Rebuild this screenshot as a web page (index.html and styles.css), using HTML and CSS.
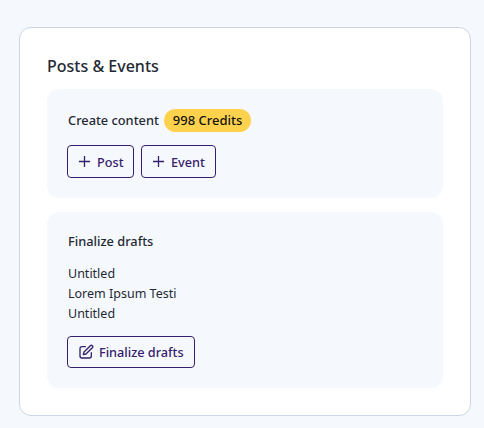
FILE: index.html

```html
<!DOCTYPE html>
<html lang="en">
<head>
  <meta charset="UTF-8">
  <meta name="viewport" content="width=device-width, initial-scale=1.0">
  <title>Posts &amp; Events</title>
  <link rel="stylesheet" href="styles.css">
</head>
<body>
  <div class="card">
    <h2 class="card-title">Posts &amp; Events</h2>
    <div class="panel panel-create">
      <div class="panel-head">
        <span class="panel-label">Create content</span>
        <span class="credits">998 Credits</span>
      </div>
      <div class="actions">
        <button class="btn">
          <svg class="icon-plus" viewBox="0 0 14 14"><path d="M7 1v12M1 7h12"/></svg>
          Post
        </button>
        <button class="btn btn-event">
          <svg class="icon-plus" viewBox="0 0 14 14"><path d="M7 1v12M1 7h12"/></svg>
          Event
        </button>
      </div>
    </div>
    <div class="panel panel-drafts">
      <div class="panel-label">Finalize drafts</div>
      <ul class="draft-list">
        <li>Untitled</li>
        <li>Lorem Ipsum Testi</li>
        <li>Untitled</li>
      </ul>
      <button class="btn btn-wide">
        <svg class="icon-edit" viewBox="0 0 24 24"><path d="M11 4H6a3 3 0 0 0-3 3v11a3 3 0 0 0 3 3h11a3 3 0 0 0 3-3v-5"/><path d="M18.5 2.5a2.1 2.1 0 0 1 3 3L12 15l-4 1 1-4z"/></svg>
        Finalize drafts
      </button>
    </div>
  </div>
</body>
</html>
```

FILE: styles.css

```css
* {
  box-sizing: border-box;
}
body {
  margin: 0;
  padding: 27px 13px 12px 19px;
  font-family: "Noto Sans", "Open Sans", sans-serif;
  background-color: #f5f9fd;
  color: #1f2933;
}
.card {
  height: 389px;
  padding: 27px;
  background-color: #fff;
  border: 1px solid #ccd5e3;
  border-radius: 12px;
}
.card-title {
  margin: 0 0 12px;
  font-size: 16px;
  line-height: 22px;
  font-weight: 500;
}
.panel {
  padding: 20px 20px 20px 21px;
  background-color: #f5f9fd;
  border-radius: 12px;
}
.panel-create {
  height: 109px;
  margin-bottom: 14px;
}
.panel-drafts {
  height: 176px;
  padding-top: 18px;
}
.panel-head {
  display: flex;
  align-items: center;
  gap: 5px;
  margin-bottom: 13px;
}
.panel-label {
  font-size: 12.8px;
  line-height: 23px;
  font-weight: 500;
}
.credits {
  padding: 0 9px;
  font-size: 13px;
  line-height: 23px;
  font-weight: 500;
  color: #111;
  background-color: #ffd24d;
  border-radius: 12px;
}
.actions {
  display: flex;
  gap: 7px;
  margin-left: -1px;
}
.btn {
  display: inline-flex;
  align-items: center;
  gap: 6px;
  height: 33px;
  padding: 0 9.5px 0 10px;
  font-family: inherit;
  font-size: 12.7px;
  font-weight: 500;
  color: #35206b;
  background-color: transparent;
  border: 1px solid #35206b;
  border-radius: 4px;
}
.btn-event {
  padding-right: 10.5px;
}
.btn-wide {
  height: 32px;
  margin-left: -1px;
  padding-right: 10px;
  gap: 5px;
}
.icon-plus {
  width: 13px;
  height: 13px;
  fill: none;
  stroke: #35206b;
  stroke-width: 1.4;
}
.icon-edit {
  width: 16px;
  height: 16px;
  fill: none;
  stroke: #35206b;
  stroke-width: 2;
  stroke-linecap: round;
  stroke-linejoin: round;
}
.draft-list {
  margin: 11px 0 12px;
  padding: 0;
  list-style: none;
  font-size: 12.5px;
  line-height: 20px;
}
```
